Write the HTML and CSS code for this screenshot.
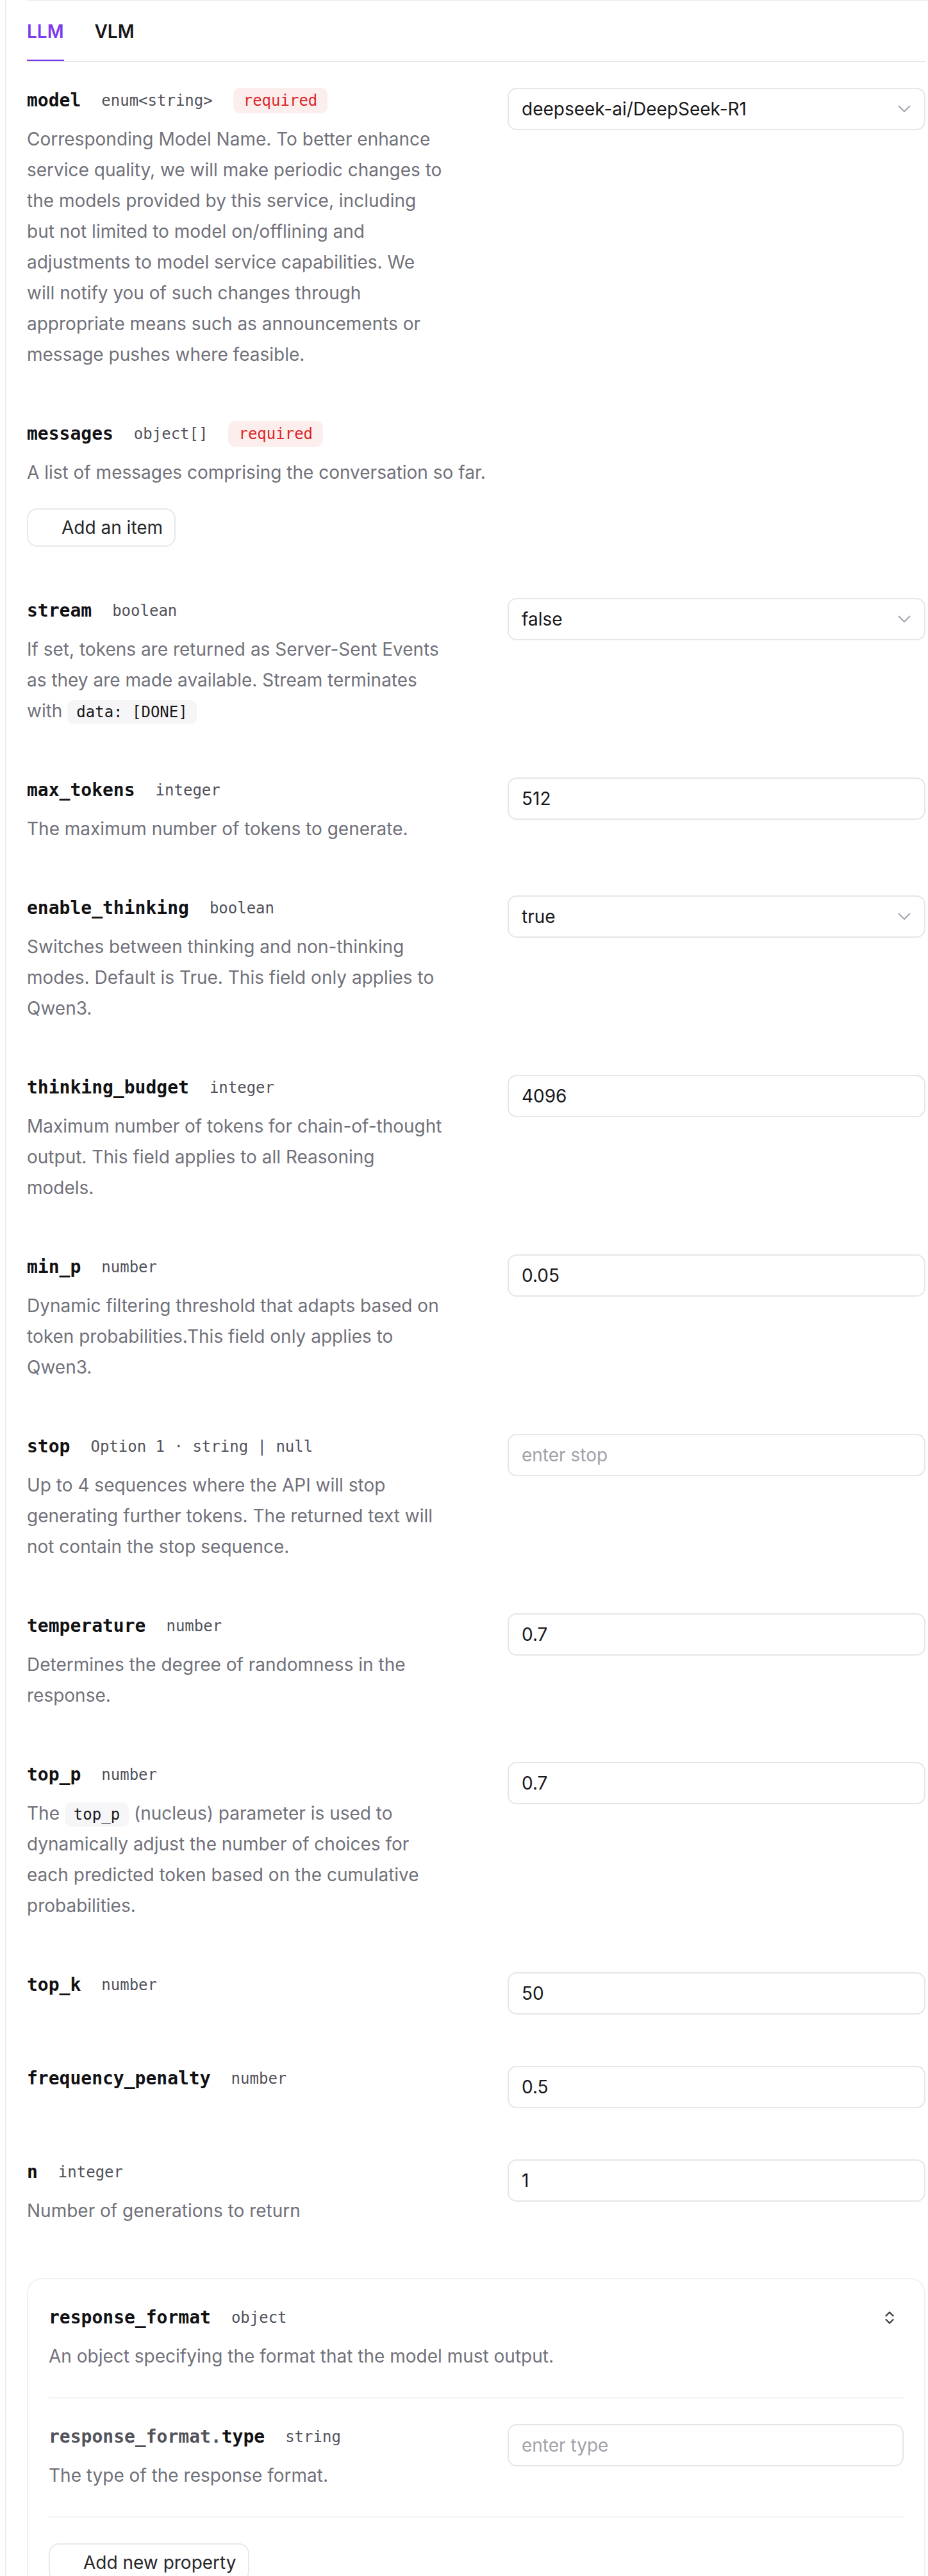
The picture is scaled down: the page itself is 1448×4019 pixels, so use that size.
FILE: index.html
```html
<!DOCTYPE html>
<html lang="en">
<head>
<meta charset="utf-8">
<title>Request body</title>
<link rel="stylesheet" href="styles.css">
</head>
<body>
<div class="frame">
  <div class="panel">
    <div class="tabs">
      <div class="tab active">LLM</div>
      <div class="tab">VLM</div>
    </div>

    <div class="param">
      <div class="left">
        <div class="head"><span class="name">model</span><span class="type">enum&lt;string&gt;</span><span class="req">required</span></div>
        <p class="desc">Corresponding Model Name. To better enhance service quality, we will make periodic changes to the models provided by this service, including but not limited to model on/offlining and adjustments to model service capabilities. We will notify you of such changes through appropriate means such as announcements or message pushes where feasible.</p>
      </div>
      <div class="field select"><span>deepseek-ai/DeepSeek-R1</span><svg class="chev" width="20" height="12" viewBox="0 0 20 12"><polyline points="1.5,1.5 10,10 18.5,1.5" fill="none" stroke="currentColor" stroke-width="2" stroke-linecap="round" stroke-linejoin="round"/></svg></div>
    </div>

    <div class="param">
      <div class="left full">
        <div class="head"><span class="name">messages</span><span class="type">object[]</span><span class="req">required</span></div>
        <p class="desc">A list of messages comprising the conversation so far.</p>
        <button class="btn">Add an item</button>
      </div>
    </div>

    <div class="param">
      <div class="left">
        <div class="head"><span class="name">stream</span><span class="type">boolean</span></div>
        <p class="desc">If set, tokens are returned as Server-Sent Events as they are made available. Stream terminates with <code class="code">data: [DONE]</code></p>
      </div>
      <div class="field select"><span>false</span><svg class="chev" width="20" height="12" viewBox="0 0 20 12"><polyline points="1.5,1.5 10,10 18.5,1.5" fill="none" stroke="currentColor" stroke-width="2" stroke-linecap="round" stroke-linejoin="round"/></svg></div>
    </div>

    <div class="param">
      <div class="left">
        <div class="head"><span class="name">max_tokens</span><span class="type">integer</span></div>
        <p class="desc">The maximum number of tokens to generate.</p>
      </div>
      <div class="field"><span>512</span></div>
    </div>

    <div class="param">
      <div class="left">
        <div class="head"><span class="name">enable_thinking</span><span class="type">boolean</span></div>
        <p class="desc">Switches between thinking and non-thinking modes. Default is True. This field only applies to Qwen3.</p>
      </div>
      <div class="field select"><span>true</span><svg class="chev" width="20" height="12" viewBox="0 0 20 12"><polyline points="1.5,1.5 10,10 18.5,1.5" fill="none" stroke="currentColor" stroke-width="2" stroke-linecap="round" stroke-linejoin="round"/></svg></div>
    </div>

    <div class="param">
      <div class="left">
        <div class="head"><span class="name">thinking_budget</span><span class="type">integer</span></div>
        <p class="desc">Maximum number of tokens for chain-of-thought output. This field applies to all Reasoning models.</p>
      </div>
      <div class="field"><span>4096</span></div>
    </div>

    <div class="param">
      <div class="left">
        <div class="head"><span class="name">min_p</span><span class="type">number</span></div>
        <p class="desc">Dynamic filtering threshold that adapts based on token probabilities.This field only applies to Qwen3.</p>
      </div>
      <div class="field"><span>0.05</span></div>
    </div>

    <div class="param">
      <div class="left">
        <div class="head"><span class="name">stop</span><span class="type">Option 1 · string | null</span></div>
        <p class="desc">Up to 4 sequences where the API will stop generating further tokens. The returned text will not contain the stop sequence.</p>
      </div>
      <div class="field"><span class="ph">enter stop</span></div>
    </div>

    <div class="param">
      <div class="left">
        <div class="head"><span class="name">temperature</span><span class="type">number</span></div>
        <p class="desc">Determines the degree of randomness in the response.</p>
      </div>
      <div class="field"><span>0.7</span></div>
    </div>

    <div class="param">
      <div class="left">
        <div class="head"><span class="name">top_p</span><span class="type">number</span></div>
        <p class="desc">The <code class="code">top_p</code> (nucleus) parameter is used to dynamically adjust the number of choices for each predicted token based on the cumulative probabilities.</p>
      </div>
      <div class="field"><span>0.7</span></div>
    </div>

    <div class="param">
      <div class="left">
        <div class="head"><span class="name">top_k</span><span class="type">number</span></div>
      </div>
      <div class="field"><span>50</span></div>
    </div>

    <div class="param">
      <div class="left">
        <div class="head"><span class="name">frequency_penalty</span><span class="type">number</span></div>
      </div>
      <div class="field"><span>0.5</span></div>
    </div>

    <div class="param">
      <div class="left">
        <div class="head"><span class="name">n</span><span class="type">integer</span></div>
        <p class="desc">Number of generations to return</p>
      </div>
      <div class="field"><span>1</span></div>
    </div>

    <div class="obj">
      <div class="obj-item">
        <div class="head head-wide">
          <div class="head-l"><span class="name">response_format</span><span class="type">object</span></div>
          <span class="toggle"><svg width="16" height="24" viewBox="0 0 16 24"><polyline points="2.5,9 8,3.5 13.5,9" fill="none" stroke="currentColor" stroke-width="2.4" stroke-linecap="round" stroke-linejoin="round"/><polyline points="2.5,15 8,20.5 13.5,15" fill="none" stroke="currentColor" stroke-width="2.4" stroke-linecap="round" stroke-linejoin="round"/></svg></span>
        </div>
        <p class="desc">An object specifying the format that the model must output.</p>
      </div>
      <div class="obj-item sub">
        <div class="left">
          <div class="head"><span class="name"><span class="prefix">response_format.</span>type</span><span class="type">string</span></div>
          <p class="desc">The type of the response format.</p>
        </div>
        <div class="field"><span class="ph">enter type</span></div>
      </div>
      <div class="obj-item">
        <button class="btn btn-first">Add new property</button>
      </div>
    </div>
  </div>
</div>
</body>
</html>
```
FILE: styles.css
```css
* {
  box-sizing: border-box;
  margin: 0;
  padding: 0;
}

body {
  background: #ffffff;
  font-family: Inter, "Noto Sans", sans-serif;
  color: #18181b;
}

.frame {
  margin-left: 8px;
  border-left: 2px solid #ececef;
  padding-left: 32px;
  min-height: 4019px;
}

.panel {
  border-top: 2px solid #f0f0f3;
}

.tabs {
  display: flex;
  gap: 48px;
  border-bottom: 2px solid #e6e6ea;
  margin-right: 4px;
}

.tab {
  font-size: 28px;
  font-weight: 600;
  line-height: 40px;
  padding: 27px 0 24px;
  border-bottom: 2px solid transparent;
  color: #18181b;
}

.tab.active {
  color: #7c3aed;
  border-bottom-color: #7c3aed;
}

.param {
  display: grid;
  grid-template-columns: 1fr 1fr;
  column-gap: 98px;
  align-items: start;
  padding: 40px 0;
  margin-right: 4px;
}

.left.full {
  grid-column: 1 / -1;
}

.head {
  display: flex;
  align-items: center;
  gap: 32px;
  min-height: 40px;
}

.head-wide {
  justify-content: space-between;
}

.head-l {
  display: flex;
  align-items: center;
  gap: 32px;
}

.name {
  font-family: "DejaVu Sans Mono", "Liberation Mono", monospace;
  font-size: 28px;
  font-weight: 600;
  line-height: 40px;
  color: #111114;
}

.prefix {
  color: #52525b;
}

.type {
  font-family: "DejaVu Sans Mono", "Liberation Mono", monospace;
  font-size: 24px;
  line-height: 40px;
  color: #52525b;
}

.req {
  font-family: "DejaVu Sans Mono", "Liberation Mono", monospace;
  font-size: 24px;
  line-height: 40px;
  height: 40px;
  padding: 0 16px;
  border-radius: 10px;
  background: #fdeeee;
  color: #dc2626;
}

.desc {
  margin-top: 16px;
  font-size: 28px;
  line-height: 48px;
  color: #71717a;
}

.code {
  display: inline-block;
  font-family: "DejaVu Sans Mono", "Liberation Mono", monospace;
  font-size: 24px;
  line-height: 38px;
  color: #18181b;
  background: #f6f6f8;
  border-radius: 10px;
  padding: 0 14px;
}

.btn {
  margin-top: 32px;
  height: 60px;
  padding: 0 18px 0 52px;
  border: 2px solid #e8e8ec;
  border-radius: 16px;
  background: #ffffff;
  font-family: Inter, "Noto Sans", sans-serif;
  font-size: 28px;
  color: #27272a;
  display: inline-flex;
  align-items: center;
}

.btn-first {
  margin-top: 0;
}

.field {
  height: 66px;
  border: 2px solid #e6e6ea;
  border-radius: 14px;
  padding: 0 20px;
  display: flex;
  align-items: center;
  justify-content: space-between;
  font-size: 28px;
  color: #18181b;
}

.ph {
  color: #a1a1aa;
}

.chev {
  color: #a1a1aa;
  margin-right: 1px;
}

.obj {
  margin-top: 41px;
  margin-right: 4px;
  border: 2px solid #f1f1f4;
  border-radius: 24px;
  padding: 0 32px;
}

.obj-item {
  padding: 40px 0;
}

.obj-item + .obj-item {
  border-top: 2px solid #f3f3f6;
}

.obj-item.sub {
  display: grid;
  grid-template-columns: 1fr 1fr;
  column-gap: 98px;
  align-items: start;
}

.toggle {
  width: 40px;
  height: 40px;
  display: flex;
  align-items: center;
  justify-content: center;
  color: #3f3f46;
  margin-right: 2px;
}
```
